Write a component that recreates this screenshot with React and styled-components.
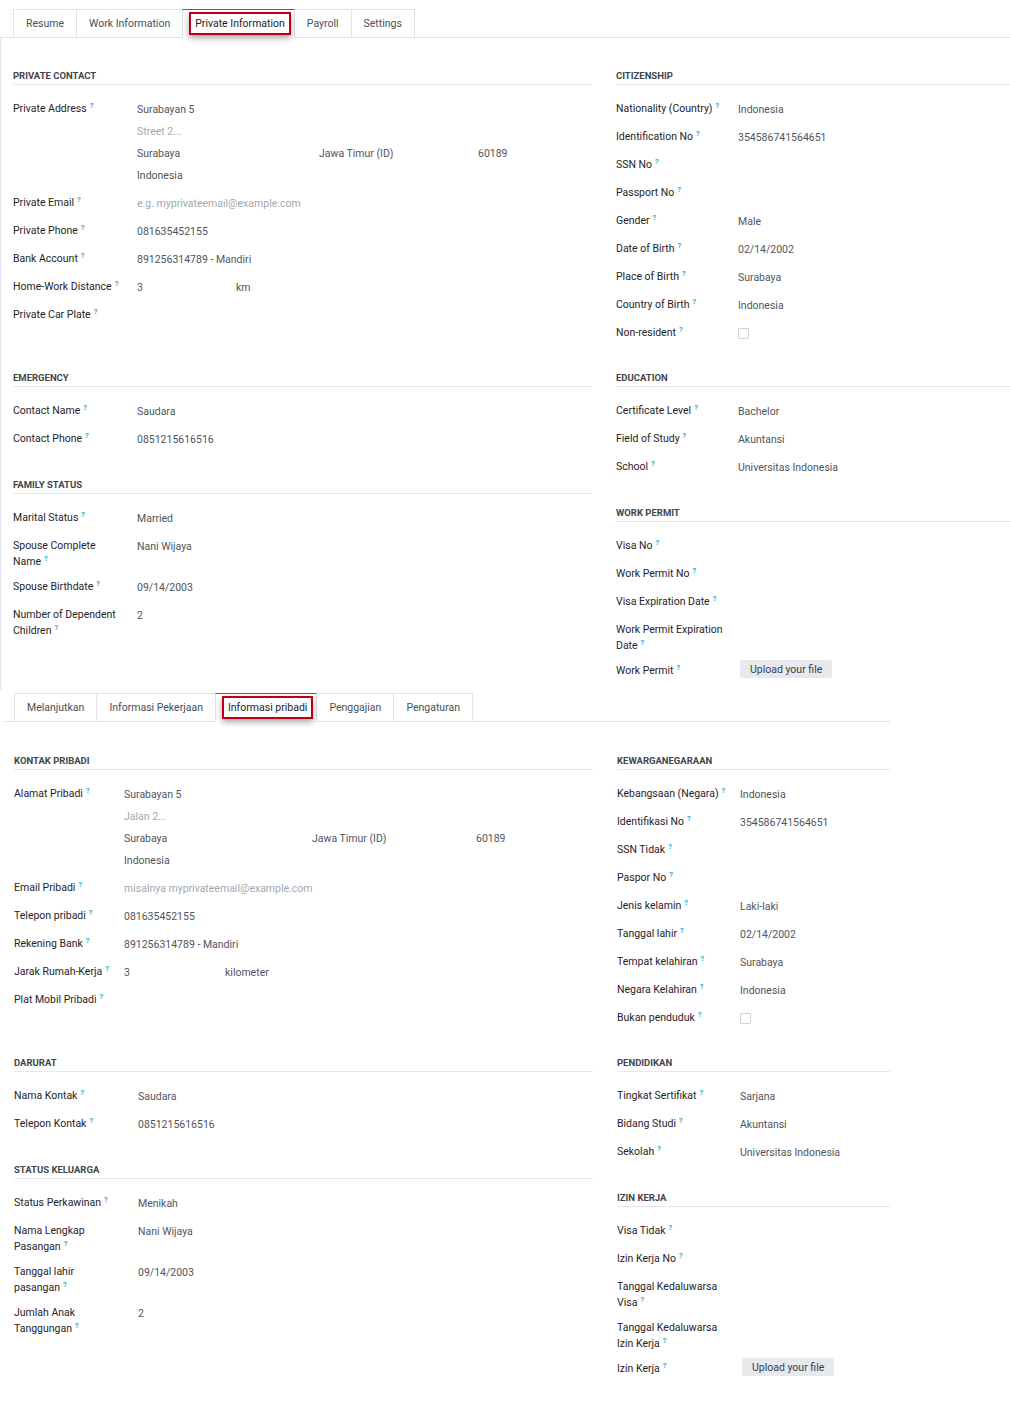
import styled, { createGlobalStyle, css } from "styled-components";

const GlobalStyle = createGlobalStyle`
  * { box-sizing: border-box; }
  body {
    margin: 0;
    background: #fff;
    font-family: Roboto, "Liberation Sans", sans-serif;
    color: #212529;
  }
`;

const Panel = styled.section`
  width: ${(p) => p.$width}px;
  padding-top: ${(p) => p.$top}px;
`;

const TabBar = styled.div`
  display: flex;
  margin-left: ${(p) => p.$lineStart}px;
  padding-left: ${(p) => p.$inset - p.$lineStart}px;
  border-bottom: 1px solid #dee2e6;
`;

const Tab = styled.div`
  height: 29px;
  margin-right: -1px;
  margin-bottom: -1px;
  padding: 0 12px;
  display: flex;
  align-items: center;
  border: 1px solid #dee2e6;
  background: #fff;
  font-size: 10.5px;
  color: #495057;
  white-space: nowrap;
  ${(p) =>
    p.$active &&
    css`
      position: relative;
      z-index: 1;
      padding: 0 3px 0 6px;
      border-top-color: #6b5a68;
      border-bottom-color: #fff;
      color: #212529;
    `}
`;

const Marked = styled.span`
  display: inline-flex;
  align-items: center;
  height: 23px;
  padding: 0 4px;
  border: 2px solid #c00012;
  box-shadow: 0 3px 6px rgba(0, 0, 0, 0.35);
`;

const Body = styled.div`
  display: grid;
  grid-template-columns: 579px 1fr;
  column-gap: 24px;
  row-gap: 24px;
  padding: ${(p) => p.$top}px 0 ${(p) => p.$bottom}px ${(p) => p.$inset}px;
  border-left: ${(p) => (p.$rule ? "1px solid #dee2e6" : "none")};
`;

const Stack = styled.div`
  display: flex;
  flex-direction: column;
  gap: 25px;
`;

const SectionTitle = styled.h3`
  margin: 0 0 10px;
  padding-bottom: 1px;
  border-bottom: 1px solid #e6e8eb;
  font-size: 9.5px;
  line-height: 14px;
  font-weight: 700;
  text-transform: uppercase;
  color: #41464c;
`;

const Row = styled.div`
  display: grid;
  grid-template-columns: ${(p) => p.$labelWidth}px 1fr;
  min-height: 28px;
  padding: 6px 0 3px;
`;

const Label = styled.div`
  font-size: 10.5px;
  line-height: 16px;
  color: #1f2328;
`;

const LabelLine = styled.span`
  display: block;
  white-space: nowrap;
`;

const Help = styled.sup`
  margin-left: 3px;
  font-size: 7.5px;
  font-weight: 700;
  line-height: 0;
  vertical-align: 4px;
  color: #3aa9cc;
`;

const Value = styled.div`
  padding-top: 1px;
  font-size: 10.5px;
  line-height: 16px;
  color: ${(p) => (p.$muted ? "#a3a7ab" : "#50555c")};
`;

const AddressBlock = styled.div`
  display: flex;
  flex-direction: column;
  gap: 6px;
  margin-bottom: 2px;
`;

const Line = styled.div`
  display: grid;
  grid-template-columns: ${(p) => p.$cols};
  color: ${(p) => (p.$muted ? "#a3a7ab" : "inherit")};
`;

const Checkbox = styled.span`
  display: block;
  width: 11px;
  height: 11px;
  margin-top: 2px;
  border: 1px solid #cfd2d6;
  border-radius: 1px;
  background: #fff;
`;

const UploadButton = styled.button`
  display: block;
  margin: -3px 0 0 2px;
  height: 18px;
  padding: 0 10px;
  border: none;
  border-radius: 3px;
  background: #e7e9ec;
  font-family: inherit;
  font-size: 10.5px;
  color: #374151;
`;

const top = {
  tabs: ["Resume", "Work Information", "Private Information", "Payroll", "Settings"],
  active: 2,
  columns: [
    [
      [
        {
          title: "Private Contact",
          labelWidth: 124,
          rows: [
            {
              label: "Private Address",
              address: {
                street: "Surabayan 5",
                street2: "Street 2...",
                cols: "182px 159px auto",
                city: ["Surabaya", "Jawa Timur (ID)", "60189"],
                country: "Indonesia",
              },
            },
            { label: "Private Email", placeholder: "e.g. myprivateemail@example.com" },
            { label: "Private Phone", value: "081635452155" },
            { label: "Bank Account", value: "891256314789 - Mandiri" },
            { label: "Home-Work Distance", distance: ["3", "km"], distWidth: 99 },
            { label: "Private Car Plate" },
          ],
        },
      ],
      [
        {
          title: "Citizenship",
          labelWidth: 122,
          rows: [
            { label: "Nationality (Country)", value: "Indonesia" },
            { label: "Identification No", value: "354586741564651" },
            { label: "SSN No" },
            { label: "Passport No" },
            { label: "Gender", value: "Male" },
            { label: "Date of Birth", value: "02/14/2002" },
            { label: "Place of Birth", value: "Surabaya" },
            { label: "Country of Birth", value: "Indonesia" },
            { label: "Non-resident", checkbox: true },
          ],
        },
      ],
    ],
    [
      [
        {
          title: "Emergency",
          labelWidth: 124,
          rows: [
            { label: "Contact Name", value: "Saudara" },
            { label: "Contact Phone", value: "0851215616516" },
          ],
        },
        {
          title: "Family Status",
          labelWidth: 124,
          rows: [
            { label: "Marital Status", value: "Married" },
            { label: "Spouse Complete\nName", value: "Nani Wijaya" },
            { label: "Spouse Birthdate", value: "09/14/2003" },
            { label: "Number of Dependent\nChildren", value: "2" },
          ],
        },
      ],
      [
        {
          title: "Education",
          labelWidth: 122,
          rows: [
            { label: "Certificate Level", value: "Bachelor" },
            { label: "Field of Study", value: "Akuntansi" },
            { label: "School", value: "Universitas Indonesia" },
          ],
        },
        {
          title: "Work Permit",
          labelWidth: 122,
          rows: [
            { label: "Visa No" },
            { label: "Work Permit No" },
            { label: "Visa Expiration Date" },
            { label: "Work Permit Expiration\nDate" },
            { label: "Work Permit", upload: true },
          ],
        },
      ],
    ],
  ],
};

const bottom = {
  tabs: ["Melanjutkan", "Informasi Pekerjaan", "Informasi pribadi", "Penggajian", "Pengaturan"],
  active: 2,
  columns: [
    [
      [
        {
          title: "Kontak Pribadi",
          labelWidth: 110,
          rows: [
            {
              label: "Alamat Pribadi",
              address: {
                street: "Surabayan 5",
                street2: "Jalan 2...",
                cols: "188px 164px auto",
                city: ["Surabaya", "Jawa Timur (ID)", "60189"],
                country: "Indonesia",
              },
            },
            { label: "Email Pribadi", placeholder: "misalnya myprivateemail@example.com" },
            { label: "Telepon pribadi", value: "081635452155" },
            { label: "Rekening Bank", value: "891256314789 - Mandiri" },
            { label: "Jarak Rumah-Kerja", distance: ["3", "kilometer"], distWidth: 101 },
            { label: "Plat Mobil Pribadi" },
          ],
        },
      ],
      [
        {
          title: "Kewarganegaraan",
          labelWidth: 123,
          rows: [
            { label: "Kebangsaan (Negara)", value: "Indonesia" },
            { label: "Identifikasi No", value: "354586741564651" },
            { label: "SSN Tidak" },
            { label: "Paspor No" },
            { label: "Jenis kelamin", value: "Laki-laki" },
            { label: "Tanggal lahir", value: "02/14/2002" },
            { label: "Tempat kelahiran", value: "Surabaya" },
            { label: "Negara Kelahiran", value: "Indonesia" },
            { label: "Bukan penduduk", checkbox: true },
          ],
        },
      ],
    ],
    [
      [
        {
          title: "Darurat",
          labelWidth: 124,
          rows: [
            { label: "Nama Kontak", value: "Saudara" },
            { label: "Telepon Kontak", value: "0851215616516" },
          ],
        },
        {
          title: "Status Keluarga",
          labelWidth: 124,
          rows: [
            { label: "Status Perkawinan", value: "Menikah" },
            { label: "Nama Lengkap\nPasangan", value: "Nani Wijaya" },
            { label: "Tanggal lahir\npasangan", value: "09/14/2003" },
            { label: "Jumlah Anak\nTanggungan", value: "2" },
          ],
        },
      ],
      [
        {
          title: "Pendidikan",
          labelWidth: 123,
          rows: [
            { label: "Tingkat Sertifikat", value: "Sarjana" },
            { label: "Bidang Studi", value: "Akuntansi" },
            { label: "Sekolah", value: "Universitas Indonesia" },
          ],
        },
        {
          title: "Izin Kerja",
          labelWidth: 123,
          rows: [
            { label: "Visa Tidak" },
            { label: "Izin Kerja No" },
            { label: "Tanggal Kedaluwarsa\nVisa" },
            { label: "Tanggal Kedaluwarsa\nIzin Kerja" },
            { label: "Izin Kerja", upload: true },
          ],
        },
      ],
    ],
  ],
};

function FieldValue({ row }) {
  if (row.address) {
    const a = row.address;
    return (
      <Value>
        <AddressBlock>
          <div>{a.street}</div>
          <Line $cols="auto" $muted>{a.street2}</Line>
          <Line $cols={a.cols}>
            {a.city.map((c) => (
              <span key={c}>{c}</span>
            ))}
          </Line>
          <div>{a.country}</div>
        </AddressBlock>
      </Value>
    );
  }
  if (row.placeholder) return <Value $muted>{row.placeholder}</Value>;
  if (row.distance)
    return (
      <Value>
        <Line $cols={`${row.distWidth}px auto`}>
          <span>{row.distance[0]}</span>
          <span>{row.distance[1]}</span>
        </Line>
      </Value>
    );
  if (row.checkbox)
    return (
      <Value>
        <Checkbox />
      </Value>
    );
  if (row.upload)
    return (
      <div>
        <UploadButton>Upload your file</UploadButton>
      </div>
    );
  return <Value>{row.value}</Value>;
}

function FieldLabel({ text }) {
  const lines = text.split("\n");
  return (
    <Label>
      {lines.map((line, i) => (
        <LabelLine key={line}>
          {line}
          {i === lines.length - 1 && <Help>?</Help>}
        </LabelLine>
      ))}
    </Label>
  );
}

function Section({ section }) {
  return (
    <div>
      <SectionTitle>{section.title}</SectionTitle>
      {section.rows.map((row) => (
        <Row key={row.label} $labelWidth={section.labelWidth}>
          <FieldLabel text={row.label} />
          <FieldValue row={row} />
        </Row>
      ))}
    </div>
  );
}

function FormPanel({ form, width, topPad, inset, lineStart, rule, bodyTop, bottomPad }) {
  return (
    <Panel $width={width} $top={topPad}>
      <TabBar $inset={inset} $lineStart={lineStart}>
        {form.tabs.map((t, i) => (
          <Tab key={t} $active={i === form.active}>
            {i === form.active ? <Marked>{t}</Marked> : t}
          </Tab>
        ))}
      </TabBar>
      <Body $inset={rule ? inset - 1 : inset} $rule={rule} $top={bodyTop} $bottom={bottomPad}>
        {form.columns.map((pair, r) =>
          pair.map((stack, c) => (
            <Stack key={`${r}-${c}`}>
              {stack.map((s) => (
                <Section key={s.title} section={s} />
              ))}
            </Stack>
          ))
        )}
      </Body>
    </Panel>
  );
}

export default function App() {
  return (
    <>
      <GlobalStyle />
      <FormPanel
        form={top}
        width={1010}
        topPad={9}
        inset={13}
        lineStart={0}
        rule
        bodyTop={31}
        bottomPad={5}
      />
      <FormPanel
        form={bottom}
        width={890}
        topPad={3}
        inset={14}
        lineStart={5}
        bodyTop={32}
        bottomPad={20}
      />
    </>
  );
}
